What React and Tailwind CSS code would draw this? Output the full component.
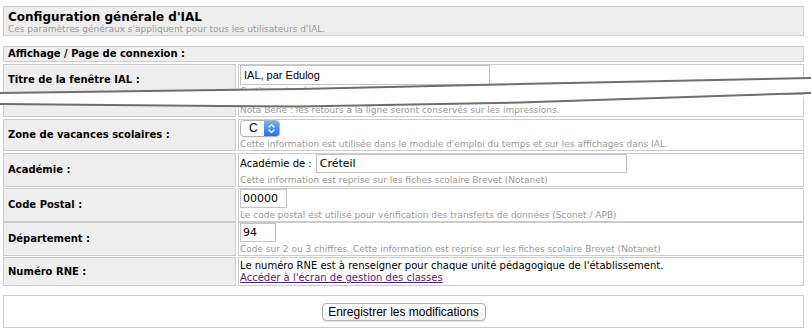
import React from 'react';

const rows = [
  {
    label: 'Zone de vacances scolaires :',
    height: 'h-[32px]',
    control: 'select',
    value: 'C',
    help: "Cette information est utilisée dans le module d'emploi du temps et sur les affichages dans IAL."
  },
  {
    label: 'Académie :',
    height: 'h-[33px]',
    control: 'academie',
    value: 'Créteil',
    help: 'Cette information est reprise sur les fiches scolaire Brevet (Notanet)'
  },
  {
    label: 'Code Postal :',
    height: 'h-[32px]',
    control: 'input',
    width: 'w-[47px]',
    value: '00000',
    help: 'Le code postal est utilisé pour vérification des transferts de données (Sconet / APB)'
  },
  {
    label: 'Département :',
    height: 'h-[33px]',
    control: 'input',
    width: 'w-[36px]',
    value: '94',
    help: 'Code sur 2 ou 3 chiffres. Cette information est reprise sur les fiches scolaire Brevet (Notanet)'
  }
];

function App() {
  return (
    <div className="relative w-[811px] h-[332px] overflow-hidden bg-white text-black font-['DejaVu_Sans',Verdana,sans-serif]">
      <div className="w-[804px] pl-[3px] pt-[6px]">
        {renderHeader()}
        <div className="mt-[10px] flex flex-col gap-[2px]">
          <div className="h-[16px] border border-[#ccc] bg-[#eee] pl-[4px] flex items-center text-[10px] font-bold leading-none">
            Affichage / Page de connexion :
          </div>
          {renderTitreRow()}
          {renderCutRow()}
          {rows.map((row, i) => renderRow(row, i))}
          {renderRneRow()}
        </div>
        {renderSaveBox()}
      </div>
      {renderCut()}
    </div>
  );
}

function renderHeader() {
  return (
    <div className="h-[30px] border border-[#ccc] bg-[#eee] pl-[4px] pt-[4px]">
      <h1 className="text-[12px] font-bold leading-[13px]">Configuration générale d'IAL</h1>
      <p className="text-[9px] leading-[11px] text-[#999]">
        Ces paramètres généraux s'appliquent pour tous les utilisateurs d'IAL.
      </p>
    </div>
  );
}

function renderLabel(text) {
  return (
    <div className="border border-[#ccc] bg-[#eee] pl-[4px] flex items-center text-[10px] font-bold leading-none">
      {text}
    </div>
  );
}

function renderHelp(text) {
  return <p className="text-[9px] leading-[11px] text-[#999] whitespace-nowrap">{text}</p>;
}

function renderTitreRow() {
  return (
    <div className="grid grid-cols-[233px_1fr] gap-[2px] h-[31px]">
      {renderLabel('Titre de la fenêtre IAL :')}
      <div className="border border-[#ccc] pl-[1px] overflow-hidden">
        <input
          readOnly
          value="IAL, par Edulog"
          className="block h-[20px] w-[250px] border border-[#c4c4c4] px-[3px] text-[11px] font-['Liberation_Sans',Arial,sans-serif] outline-none"
        />
        <div className="mt-[1px]">{renderHelp('Ce titre est présent dans la barre de titre des navigateurs.')}</div>
      </div>
    </div>
  );
}

function renderCutRow() {
  return (
    <div className="grid grid-cols-[233px_1fr] gap-[2px] h-[20px]">
      <div className="border border-[#ccc] bg-[#eee]"></div>
      <div className="border border-[#ccc] border-t-transparent pl-[1px] flex items-end">
        {renderHelp('Nota Bene : les retours à la ligne seront conservés sur les impressions.')}
      </div>
    </div>
  );
}

function renderControl(row) {
  if (row.control === 'select') {
    return (
      <div className="flex h-[17px] w-[40px] rounded-[4px] border border-[#b5b5b5] bg-white overflow-hidden shadow-[0_1px_1px_rgba(0,0,0,0.08)]">
        <span className="flex-1 pl-[8px] text-[12px] leading-[15px] font-['Liberation_Sans',Arial,sans-serif]">{row.value}</span>
        <span className="w-[15px] flex items-center justify-center bg-gradient-to-b from-[#6fb2fb] to-[#1e6fee]">
          <svg width="7" height="11" viewBox="0 0 7 11" fill="none" stroke="white" strokeWidth="1.3" strokeLinecap="round" strokeLinejoin="round">
            <path d="M1 4l2.5-2.5L6 4" />
            <path d="M1 7l2.5 2.5L6 7" />
          </svg>
        </span>
      </div>
    );
  }
  if (row.control === 'academie') {
    return (
      <div className="flex items-center h-[19px]">
        <span className="text-[10px] leading-none pr-[4px]">Académie de :</span>
        <input
          readOnly
          value={row.value}
          className="block h-[19px] w-[311px] border border-[#c4c4c4] px-[3px] text-[11px] outline-none"
        />
      </div>
    );
  }
  return (
    <input
      readOnly
      value={row.value}
      className={`block h-[19px] ${row.width} border border-[#c4c4c4] px-[2px] text-[11px] outline-none`}
    />
  );
}

function renderRow(row, index) {
  return (
    <div key={index} className={`grid grid-cols-[233px_1fr] gap-[2px] ${row.height}`}>
      {renderLabel(row.label)}
      <div className="border border-[#ccc] pl-[1px]">
        {renderControl(row)}
        <div className="mt-[2px]">{renderHelp(row.help)}</div>
      </div>
    </div>
  );
}

function renderRneRow() {
  return (
    <div className="grid grid-cols-[233px_1fr] gap-[2px] h-[29px]">
      {renderLabel('Numéro RNE :')}
      <div className="border border-[#ccc] pl-[1px] pt-[2px] text-[10px] leading-[12px]">
        <p>Le numéro RNE est à renseigner pour chaque unité pédagogique de l'établissement.</p>
        <a href="#" className="text-[#551a8b] underline">Accéder à l'écran de gestion des classes</a>
      </div>
    </div>
  );
}

function renderSaveBox() {
  return (
    <div className="mt-[9px] h-[33px] border border-[#ccc] flex items-center justify-center">
      <button className="h-[18px] w-[164px] rounded-[4px] border border-[#b0b0b0] bg-gradient-to-b from-white to-[#f1f1f1] text-[12px] leading-none font-['Liberation_Sans',Arial,sans-serif] shadow-[0_1px_1px_rgba(0,0,0,0.1)]">
        Enregistrer les modifications
      </button>
    </div>
  );
}

function renderCut() {
  const upper = '0,93 220,90 300,89 520,84 811,78';
  const lower = '811,93 520,102.5 300,106.5 220,106 0,104';
  return (
    <svg className="absolute left-0 top-0 pointer-events-none" width="811" height="332" viewBox="0 0 811 332">
      <polygon points={`${upper} ${lower}`} fill="white" />
      <polyline points={upper} fill="none" stroke="#6e6e6e" strokeWidth="2" />
      <polyline points={lower} fill="none" stroke="#6e6e6e" strokeWidth="2" />
    </svg>
  );
}

export default App;
